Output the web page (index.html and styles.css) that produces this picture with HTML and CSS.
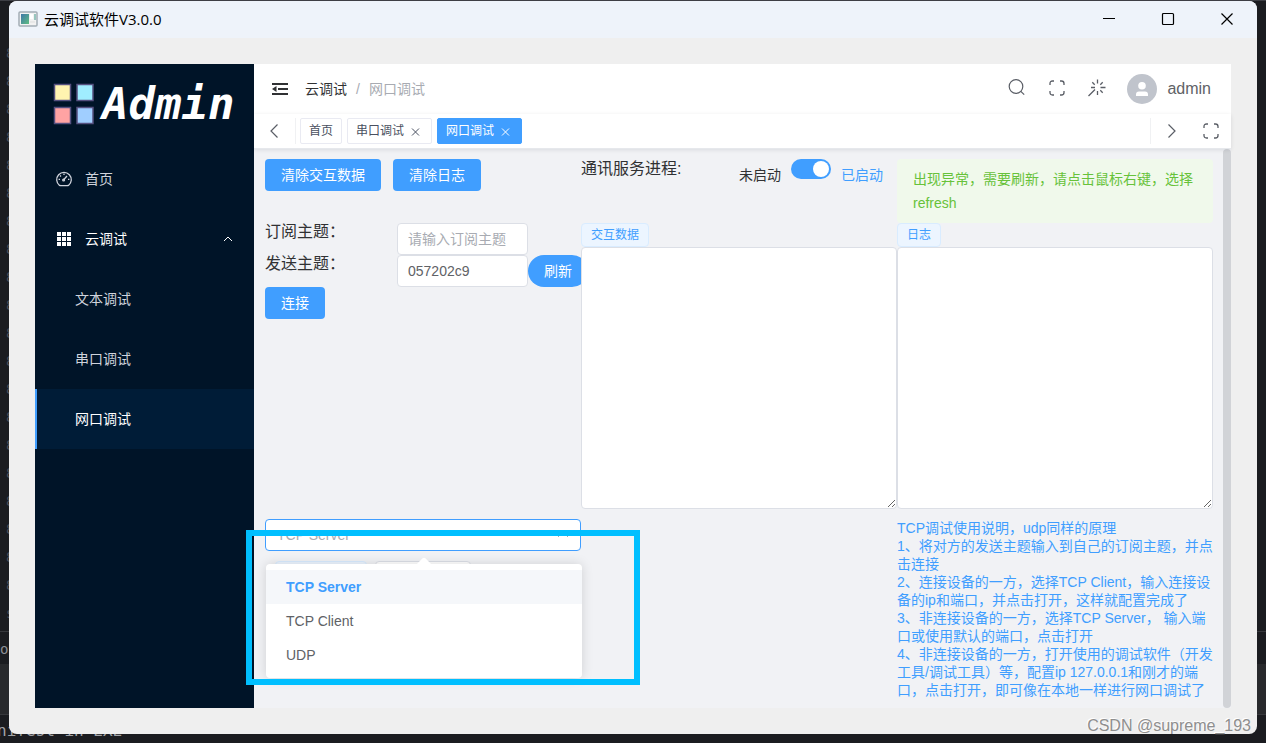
FILE: index.html
```html
<!DOCTYPE html>
<html lang="zh-CN">
<head>
<meta charset="utf-8">
<title>云调试软件V3.0.0</title>
<link rel="stylesheet" href="styles.css">
</head>
<body>
<svg class="symbols" aria-hidden="true">
  <symbol id="full" viewBox="0 0 16 16"><path d="M1 5V3.500Q1 1 3.500 1H5M11 1h1.500Q15 1 15 3.500V5M15 11v1.500Q15 15 12.500 15H11M5 15H3.500Q1 15 1 12.500V11" fill="none" stroke="currentColor" stroke-width="1.300"/></symbol>
  <symbol id="close" viewBox="0 0 14 14"><path d="M3 4.500l7 7M10 4.500l-7 7" fill="none" stroke="currentColor" stroke-width="1"/></symbol>
</svg>
<div class="editor" aria-hidden="true">
  <pre class="gutter">8
8
8
8
8
8
8
8
8
8
8
8
8
8
8
8
8
8
8
8
s</pre>
  <div class="editor-panel">o</div>
  <div class="editor-foot">nifest in EXE</div>
</div>

<div class="window">
  <header class="titlebar">
    <svg class="app-icon" width="20" height="18" viewBox="0 0 20 18"><defs><linearGradient id="g" x2="1" y2="1"><stop stop-color="#3f78a8"/><stop offset="1" stop-color="#5fbd82"/></linearGradient></defs><rect x="1" y="2" width="18" height="14" rx="1" fill="#f2f2f2" stroke="#a3adb5" stroke-width="1.500"/><rect x="3" y="4" width="8" height="10" fill="url(#g)"/><path d="M12 4h3v5h-3z" fill="#fff"/><path d="M17 4v6" stroke="#3e9a8a"/><path d="M12 12h5" stroke="#ddd"/></svg>
    <h1 class="window-title">云调试软件V3.0.0</h1>
    <div class="window-controls">
      <button type="button" aria-label="最小化"><svg width="14" height="14" viewBox="0 0 14 14"><path d="M1 6.500h12" stroke="#000"/></svg></button>
      <button type="button" aria-label="最大化"><svg width="14" height="14" viewBox="0 0 14 14"><rect x="1.500" y="1.500" width="11" height="11" rx="1" fill="none" stroke="#000" stroke-width="1.200"/></svg></button>
      <button type="button" aria-label="关闭"><svg width="14" height="14" viewBox="0 0 14 14"><path d="M1.500 1.500l11 11M12.500 1.500l-11 11" stroke="#000" stroke-width="1.200"/></svg></button>
    </div>
  </header>

  <div class="app">
    <nav class="sidebar">
      <div class="logo">
        <svg width="42" height="42" viewBox="0 0 42 42" stroke="#55507f" stroke-width="1.500"><rect x="1.500" y="1.500" width="16" height="16" fill="#fff4b0"/><rect x="24" y="1.500" width="16" height="16" fill="#a0edff"/><rect x="1.500" y="24.500" width="16" height="16" fill="#ffa3a3"/><rect x="24" y="24.500" width="16" height="16" fill="#a0ceff"/></svg>
        <span class="logo-text">Admin</span>
      </div>
      <a class="menu-item" href="#home">
        <svg width="18" height="18" viewBox="0 0 18 18" fill="none" stroke="currentColor" stroke-width="1.300"><path d="M4.500 15.400A7.300 7.300 0 1 1 13.500 15.400Q13 15.600 12 15.600H6Q5 15.600 4.500 15.400z"/><path d="M9 3.500v1.500M3.600 9.300h1.400M13 9.300h1.400M5 5.500l1 1M8.500 10l3.500-4"/><circle cx="8.600" cy="10" r=".9"/></svg>
        <span>首页</span>
      </a>
      <a class="menu-item open" href="#cloud">
        <svg width="18" height="18" viewBox="0 0 18 18" fill="currentColor"><path d="M2 2h4v4H2zM7 2h4v4H7zM12 2h4v4h-4zM2 7h4v4H2zM7 7h4v4H7zM12 7h4v4h-4zM2 12h4v4H2zM7 12h4v4H7zM12 12h4v4h-4z"/></svg>
        <span>云调试</span>
        <svg class="menu-arrow" width="12" height="12" viewBox="0 0 12 12"><path d="M2 8l4-4 4 4" fill="none" stroke="currentColor"/></svg>
      </a>
      <a class="menu-item sub" href="#text">文本调试</a>
      <a class="menu-item sub" href="#serial">串口调试</a>
      <a class="menu-item sub active" href="#net">网口调试</a>
    </nav>

    <main class="main">
      <header class="topbar">
        <button class="icon-btn" type="button" aria-label="折叠菜单"><svg width="16" height="16" viewBox="0 0 16 16"><path d="M0 3h16M6 8h10M0 13h16" stroke="#303133" stroke-width="2"/><path d="M0 8l4.500-3v6z" fill="#303133"/></svg></button>
        <div class="breadcrumb"><a href="#cloud">云调试</a><span class="slash">/</span><span class="current">网口调试</span></div>
        <div class="tools">
          <button class="icon-btn" type="button" aria-label="搜索"><svg width="18" height="18" viewBox="0 0 18 18" fill="none" stroke="currentColor" stroke-width="1.200"><circle cx="8" cy="7.500" r="6.800"/><path d="M12.800 12.300l3.400 3.400"/></svg></button>
          <button class="icon-btn" type="button" aria-label="全屏"><svg width="16" height="16"><use href="#full"/></svg></button>
          <button class="icon-btn" type="button" aria-label="主题"><svg width="18" height="18" viewBox="0 0 18 18" fill="none" stroke="currentColor" stroke-width="1.300"><path d="M.5 17l6.500-6.500M9.500 .5v4M9.500 12v4M3 8.500h4M12.500 8.500h5M4.300 3.300l2.400 2.400M14.700 3.300l-2.400 2.400M12.300 11.300l2.400 2.400"/></svg></button>
        </div>
        <div class="user">
          <svg width="30" height="30" viewBox="0 0 30 30"><circle cx="15" cy="15" r="15" fill="#c0c4cc"/><circle cx="15" cy="11.800" r="3.800" fill="#fff"/><path d="M9 22v-1.500Q9 17.500 12 17.500h6q3 0 3 3V22z" fill="#fff"/></svg>
          <span>admin</span>
        </div>
      </header>

      <div class="tabs">
        <button class="tabs-nav prev" type="button" aria-label="向左"><svg width="16" height="16" viewBox="0 0 16 16"><path d="M10.500 1.500L4 8l6.500 6.500" fill="none" stroke="currentColor" stroke-width="1.200"/></svg></button>
        <div class="tab-list">
          <a class="tab" href="#home">首页</a>
          <a class="tab" href="#serial">串口调试<svg width="14" height="14"><use href="#close"/></svg></a>
          <a class="tab selected" href="#net">网口调试<svg width="14" height="14"><use href="#close"/></svg></a>
        </div>
        <button class="tabs-nav next" type="button" aria-label="向右"><svg width="16" height="16" viewBox="0 0 16 16"><path d="M5.500 1.500L12 8l-6.500 6.500" fill="none" stroke="currentColor" stroke-width="1.200"/></svg></button>
        <button class="tabs-nav" type="button" aria-label="内容全屏"><svg width="16" height="16"><use href="#full"/></svg></button>
      </div>

      <div class="scroll">
        <div class="content">
          <div class="actions">
            <button class="btn" type="button">清除交互数据</button>
            <button class="btn" type="button">清除日志</button>
          </div>
          <div class="service">
            <span class="service-name">通讯服务进程:</span>
            <label class="switch-row"><span>未启动</span><input class="switch" type="checkbox" role="switch" checked><span class="on">已启动</span></label>
          </div>
          <p class="alert">出现异常，需要刷新，请点击鼠标右键，选择refresh</p>

          <form class="topics">
            <label class="topic-label" for="sub">订阅主题：</label>
            <input class="field" id="sub" type="text" placeholder="请输入订阅主题">
            <span></span>
            <label class="topic-label" for="pub">发送主题：</label>
            <input class="field" id="pub" type="text" value="057202c9">
            <button class="btn round" type="button">刷新</button>
            <button class="btn connect" type="button">连接</button>
          </form>
          <div class="pane">
            <label class="tag" for="data">交互数据</label>
            <textarea class="log" id="data"></textarea>
          </div>
          <div class="pane">
            <label class="tag" for="log">日志</label>
            <textarea class="log" id="log"></textarea>
          </div>

          <div class="mode">
            <select class="select" aria-label="工作模式"><option>TCP Server</option><option>TCP Client</option><option>UDP</option></select>
            <svg class="select-arrow" width="14" height="14" viewBox="0 0 14 14"><path d="M2 9l5-5 5 5" fill="none" stroke="#a8abb2"/></svg>
            <div class="port-row"><span class="port-tag"></span><input class="port" type="text" aria-label="端口"></div>
            <ul class="dropdown" role="listbox" aria-label="工作模式选项">
              <li class="option chosen" role="option" aria-selected="true">TCP Server</li>
              <li class="option" role="option">TCP Client</li>
              <li class="option" role="option">UDP</li>
            </ul>
            <div class="highlight"></div>
          </div>
          <div class="help">
            <p>TCP调试使用说明，udp同样的原理</p>
            <p>1、将对方的发送主题输入到自己的订阅主题，并点击连接</p>
            <p>2、连接设备的一方，选择TCP Client，输入连接设备的ip和端口，并点击打开，这样就配置完成了</p>
            <p>3、非连接设备的一方，选择TCP Server， 输入端口或使用默认的端口，点击打开</p>
            <p>4、非连接设备的一方，打开使用的调试软件（开发工具/调试工具）等，配置ip 127.0.0.1和刚才的端口，点击打开，即可像在本地一样进行网口调试了</p>
          </div>
        </div>
        <div class="scrollbar"></div>
      </div>
    </main>
  </div>
</div>
<div class="watermark">CSDN @supreme_193</div>
</body>
</html>
```
FILE: styles.css
```css
* { box-sizing: border-box; }

body {
  position: relative;
  display: flex;
  min-height: 100vh;
  margin: 0;
  padding: 1px 9px 9px;
  background: #1b1c20;
  color: #303133;
  font: 14px/20px "Liberation Sans", "Noto Sans CJK SC", sans-serif;
}

button, input, select, textarea { font: inherit; color: inherit; }
button { padding: 0; border: 0; background: none; }
a { color: inherit; text-decoration: none; }
p, ul, h1, pre { margin: 0; padding: 0; }
svg { display: block; flex: none; }
.symbols { position: absolute; width: 0; height: 0; }

/* editor behind the window */
.editor {
  position: absolute;
  inset: 0;
  overflow: hidden;
  border-top: 1px solid #3d3e44;
  font-family: "DejaVu Sans Mono", monospace;
}
.gutter { position: absolute; top: 38px; left: 6px; color: #4b4f5a; font: inherit; line-height: 28px; }
.editor-panel {
  position: absolute;
  right: 0;
  bottom: 28px;
  left: 0;
  height: 84px;
  border-top: 1px solid #37383c;
  border-bottom: 1px solid #37383c;
  background: linear-gradient(#1b1c20 32px, #28292c 32px);
  color: #8d8f94;
  line-height: 34px;
}
.editor-foot { position: absolute; bottom: 2px; left: -3px; color: #a0a2a6; font-size: 16px; }

/* window frame */
.window {
  position: relative;
  display: flex;
  flex: 1;
  flex-direction: column;
  min-width: 0;
  border-radius: 8px;
  background: #efefef;
}
.titlebar {
  display: flex;
  align-items: center;
  height: 37px;
  padding: 0 1px 2px 9px;
  border-radius: 8px 8px 0 0;
  background: #eef3fa;
}
.window-title {
  flex: 1;
  margin-left: 6px;
  color: #000;
  font: 15px/20px "Open Sans", "Noto Sans CJK SC", sans-serif;
}
.window-controls { display: flex; }
.window-controls button { display: grid; place-items: center; width: 59px; height: 34px; }

.app { display: flex; flex: 1; margin: 26px; }

/* sidebar */
.sidebar { flex: none; width: 219px; background: #001428; color: #cfd3dc; }
.logo { display: flex; align-items: center; height: 85px; padding: 0 0 6px 18px; }
.logo-text {
  margin-left: 7px;
  color: #fff;
  font: italic bold 44px/50px "DejaVu Sans Mono", monospace;
}
.menu-item { display: flex; align-items: center; height: 60px; padding: 0 20px; }
.menu-item span { margin-left: 12px; }
.menu-item.open { color: #fff; }
.menu-item.sub { padding-left: 40px; }
.menu-item.active { padding-left: 38px; border-left: 2px solid #409eff; background: #001c37; color: #fff; }
.menu-arrow { margin-left: auto; }

/* top bar */
.main { display: flex; flex: 1; flex-direction: column; min-width: 0; background: #f1f2f5; }
.topbar { display: flex; align-items: center; height: 50px; padding: 0 20px 0 6px; background: #fff; }
.icon-btn { display: grid; place-items: center; width: 40px; height: 40px; color: #5a5e66; }
.breadcrumb { display: flex; margin-left: 5px; }
.slash { margin: 0 9px; color: #a8abb2; }
.current { color: #a8abb2; }
.tools { display: flex; margin-left: auto; padding-bottom: 3px; }
.user { display: flex; align-items: center; gap: 10px; margin-left: 10px; color: #606266; font-size: 16px; }

.tabs {
  position: relative;
  display: flex;
  align-items: center;
  height: 35px;
  border-bottom: 1px solid #e6e8ec;
  background: #fff;
  box-shadow: 0 1px 4px rgba(0, 21, 41, .1);
}
.tabs-nav { display: grid; place-items: center; width: 40px; height: 26px; color: #5a5e66; }
.prev { width: 42px; border-right: 1px solid #f0f1f3; }
.next { width: 41px; border-left: 1px solid #f0f1f3; }
.tab-list { display: flex; flex: 1; gap: 5px; padding-left: 4px; }
.tab {
  display: flex;
  align-items: center;
  gap: 5px;
  height: 26px;
  padding: 0 8px;
  border: 1px solid #e9eaf2;
  border-radius: 2px;
  color: #495060;
  font-size: 12px;
}
.tab.selected { border-color: #409eff; background: #409eff; color: #fff; }

/* page content */
.scroll { display: flex; flex: 1; }
.content {
  display: grid;
  flex: 1;
  grid-template-columns: repeat(3, minmax(0, 1fr));
  grid-template-rows: 64px auto 1fr;
  padding: 10px 10px 9px 11px;
}
.scrollbar { width: 8px; border-radius: 4px; background: #d1d3d7; }

.btn {
  height: 32px;
  padding: 0 16px;
  border-radius: 4px;
  background: #409eff;
  color: #fff;
  white-space: nowrap;
}
.actions { display: flex; align-items: flex-start; gap: 12px; }
.service { display: flex; justify-content: space-between; padding-right: 14px; }
.service-name { font-size: 16px; }
.switch-row { display: flex; align-items: flex-start; gap: 10px; line-height: 32px; }
.switch-row .on { color: #409eff; }
.switch {
  display: flex;
  justify-content: flex-end;
  width: 40px;
  height: 20px;
  margin: 0;
  padding: 2px;
  border-radius: 10px;
  background: #409eff;
  appearance: none;
}
.switch::before { width: 16px; height: 16px; border-radius: 50%; background: #fff; content: ""; }
.alert { padding: 8px 16px; border-radius: 4px; background: #f0f9eb; color: #67c23a; line-height: 24px; }

.topics {
  display: grid;
  grid-template-columns: 132px minmax(0, 1fr) 53px;
  grid-template-rows: 32px 32px 32px;
  overflow: hidden;
}
.topic-label { font-size: 16px; line-height: 18px; }
.field {
  width: 100%;
  height: 32px;
  padding: 0 10px;
  border: 1px solid #dcdfe6;
  border-radius: 4px;
  background: #fff;
  color: #606266;
}
.field::placeholder { color: #a8abb2; }
.round { width: 60px; border-radius: 16px; }
.connect { justify-self: start; }
.pane { display: flex; flex-direction: column; align-items: flex-start; }
.tag {
  height: 24px;
  padding: 0 9px;
  border: 1px solid #d9ecff;
  border-radius: 4px;
  background: #ecf5ff;
  color: #409eff;
  font-size: 12px;
  line-height: 22px;
}
.log {
  width: 100%;
  height: 262px;
  padding: 5px 11px;
  border: 1px solid #dcdfe6;
  border-radius: 4px;
  background: #fff;
  resize: both;
}

.mode { position: relative; grid-column: span 2; width: 50%; padding-top: 10px; }
.select {
  display: block;
  width: 100%;
  height: 32px;
  padding: 0 11px;
  border: 1px solid #409eff;
  border-radius: 4px;
  background: #fff;
  color: #a8abb2;
  appearance: none;
}
.select-arrow { position: absolute; top: 19px; right: 11px; }
.port-row { display: flex; gap: 8px; padding: 10px 0 0 10px; }
.port-tag { width: 92px; height: 32px; border: 1px solid #d9ecff; border-radius: 4px; background: #ecf5ff; }
.port { width: 96px; height: 32px; border: 1px solid #dcdfe6; border-radius: 4px; }
.dropdown {
  position: absolute;
  top: 55px;
  left: 1px;
  width: 100%;
  padding: 6px 0;
  border-radius: 4px;
  background: #fff;
  box-shadow: 0 0 12px rgba(0, 0, 0, .14);
  list-style: none;
}
.dropdown::before {
  position: absolute;
  top: -5px;
  left: 50%;
  width: 10px;
  height: 10px;
  margin-left: -5px;
  border-radius: 2px 0 0;
  background: #fff;
  content: "";
  transform: rotate(45deg);
}
.option { position: relative; height: 34px; padding: 0 20px; color: #606266; line-height: 34px; }
.chosen { background: #f5f7fa; color: #409eff; font-weight: bold; }
.highlight {
  position: absolute;
  top: 21px;
  left: -19px;
  width: 394px;
  height: 155px;
  border: 6px solid #00bfff;
  pointer-events: none;
}
.help { padding-top: 10px; color: #409eff; line-height: 18px; }

.watermark {
  position: absolute;
  right: 15px;
  bottom: 7px;
  color: #8e8e8e;
  font-size: 16px;
  text-shadow: -1px -1px #fff;
}
```
